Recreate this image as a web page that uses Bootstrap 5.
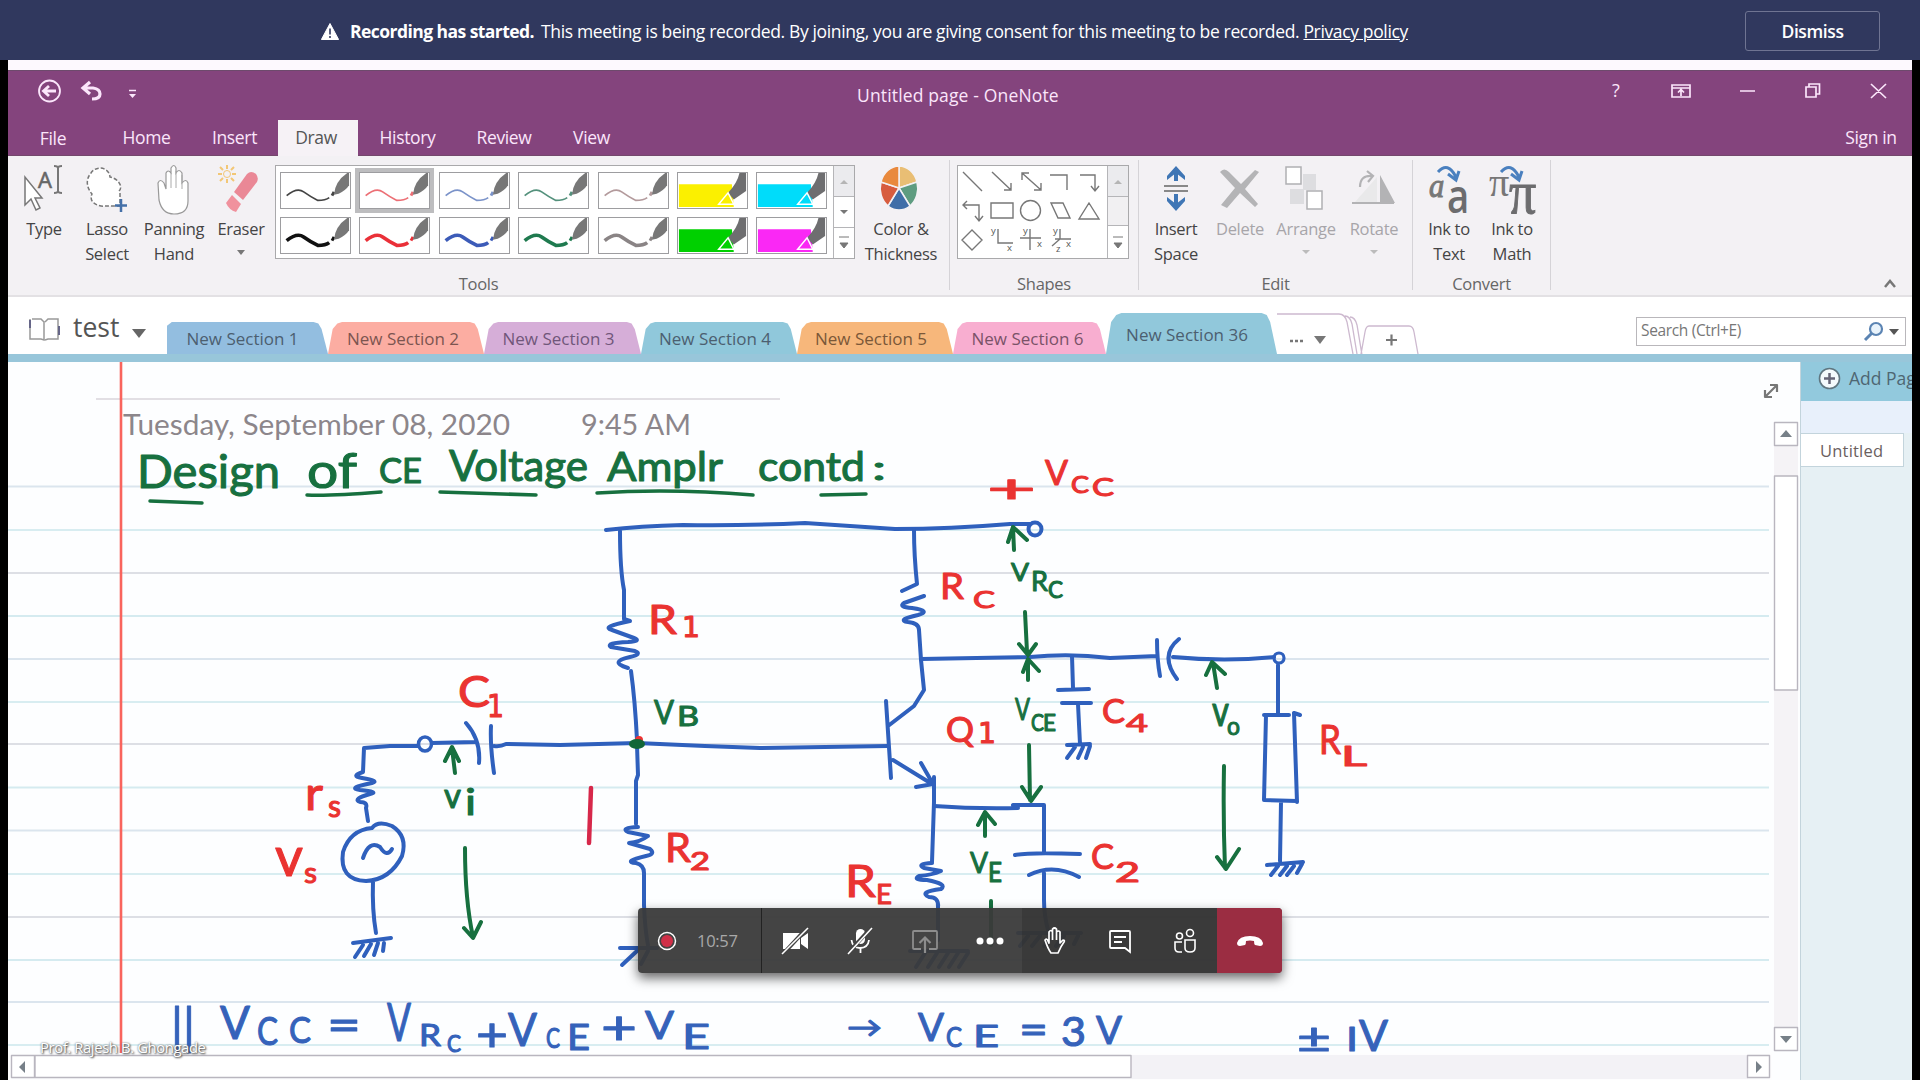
<!DOCTYPE html>
<html lang="en">
<head>
<meta charset="utf-8">
<title>Untitled page - OneNote</title>
<link href="https://cdn.jsdelivr.net/npm/bootstrap@5.3.0/dist/css/bootstrap.min.css" rel="stylesheet">
<style>
body{width:1920px;height:1080px;overflow:hidden;background:#000;font-family:"Open Sans","Noto Sans",sans-serif;color:#444}
svg{display:block;flex:none}
.banner{height:60px;background:#30385e;color:#fff;font-size:17.5px;padding:3px 40px 0 321px;letter-spacing:-.36px}
.banner a{color:#fff}
.banner strong{letter-spacing:-.55px;margin-right:7px}
.notice{margin-left:-5px}
.dismiss{width:135px;height:40px;margin-top:-2px;border:1px solid #6f7492;border-radius:3px;color:#fff;font-weight:600;font-size:17.5px;padding:2px 0 0;letter-spacing:-.4px}
.stage{margin:0 8px;height:1020px;background:#fdf9fe;padding-top:10px}
.titlebar{height:86px;background:#84447d;border-top:1px solid #6d4a6c;border-bottom:1px solid #74486c;color:#fbe6fb;font-size:17.5px}
.title-row{height:49px}
.title-text{padding:11px 0 0 9px;letter-spacing:.15px}
.menu-row{height:36px;letter-spacing:-.35px}
.menu-row>div{text-align:center;line-height:35px}
.menu-on{background:#f6f2f6;color:#555}
.ribbon{height:141px;background:#f3f1f4;border-bottom:2px solid #e3e1e4;font-size:16.5px;letter-spacing:-.3px}
.rgroup{border-right:1px solid #d5d3d7;height:130px;margin-top:4px}
.rrow{height:113px;padding-top:3px}
.rlabel{text-align:center;line-height:22px;color:#666}
.rbtn{text-align:center;line-height:25px}
.rbtn svg{margin:0 auto 3px;width:56px;height:50px;overflow:visible}
.dim{color:#a7a5a9}
.gallery{border:1px solid #a9a9ab;background:#fff;height:94px}
.pens{width:557px;padding:6px 4px;display:grid;grid-template-columns:repeat(7,71px);column-gap:8.4px;row-gap:8px;align-content:start}
.pens svg{border:1px solid #9d9da0;background:#fff;width:71px;height:37px}
.pens .picked{outline:4px solid #bdbdbf}
.gscroll{width:21px;border-left:1px solid #b5b5b8}
.gscroll div{height:31px;border-bottom:1px solid #b5b5b8}
.tabs-row{height:57px;background:#fff}
.tabs-row .book{width:159px;height:57px;font-size:26.500px;padding:0 0 0 20px;color:#555}
.book span{margin:3px 13px 0;line-height:1}
.sec{height:32px;line-height:34px;text-align:center;font-size:17px;color:#4c5f70;letter-spacing:0;clip-path:polygon(0 100%,3% 22%,6% 5%,9% 0,91% 0,94% 5%,96% 22%,100% 100%)}
.sec-on{height:41px;line-height:44px}
.search{width:270px;height:29px;border:1px solid #b9b7bb;font-size:15.5px;color:#777;letter-spacing:-.35px;margin:20px 6px 0 auto;padding-bottom:2px}
.strip{height:8px;background:#98c6da}
.page{height:718px}
.paper{width:1792px;background:#fdfeff}
.side{width:112px;background:#e6f0f4;border-left:1px solid #c3d4dc;overflow:hidden}
.addpage{height:39px;background:#92c9dd;color:#4f6672;font-size:17.5px;white-space:nowrap;padding:0 0 6px 17px}
.hint{height:32px;background:#e8f0fb}
.pagetab{width:103px;height:34px;background:#fff;border:1px solid #c3d4dc;border-left:0;line-height:33px;padding-left:19px;font-size:16.5px;letter-spacing:.2px;color:#6b5f5f}
.callbar{position:absolute;left:638px;top:908px;width:644px;height:65px;border-radius:4px;overflow:hidden;background:rgba(58,58,58,.95);color:#fff}
.callshadow{position:absolute;left:638px;top:908px;width:644px;height:65px;border-radius:4px;box-shadow:0 5px 12px rgba(0,0,0,.6)}
.callbar .slot{width:65px}
.rec{width:124px;border-right:1px solid #222;color:#a9a9a9;font-size:16.5px;letter-spacing:-.3px;padding-left:19px}
.rec span{margin:1px 0 0 -4px}
.later{background:rgba(40,40,40,.35)}
.hang{background:#9b2d42;flex:1}
.presenter{position:absolute;left:40px;top:1036px;font-size:14.8px;line-height:22px;color:#fff;letter-spacing:-.38px;text-shadow:1px 1px 2px #444,0 0 2px #666}
.ink{font-family:Lato,"Noto Sans",sans-serif;stroke-linejoin:round}
</style>
<script src="https://cdn.jsdelivr.net/npm/bootstrap@5.3.0/dist/js/bootstrap.bundle.min.js"></script>
</head>
<body>
<div class="banner d-flex align-items-center">
  <svg class="me-3" width="18" height="18" viewBox="0 0 18 18"><path d="M9 .5 17.6 16.500H.4Z" fill="#fff" stroke="#fff" stroke-linejoin="round"/><path d="M9 5.500v6M9 13v2" stroke="#30385e" stroke-width="1.600"/></svg>
  <div class="flex-grow-1 text-nowrap notice"><strong>Recording has started.</strong><span>This meeting is being recorded. By joining, you are giving consent for this meeting to be recorded.</span> <a href="#">Privacy policy</a></div>
  <button class="btn dismiss">Dismiss</button>
</div>
<div class="stage">
  <div class="titlebar">
    <div class="title-row d-flex">
      <svg width="840" height="48" viewBox="8 71 840 48" fill="none" stroke="#fbe6fb"><circle cx="49.500" cy="91" r="10.500" stroke-width="1.800"/><path d="M56 91H44M49 86l-5.500 5 5.500 5" stroke-width="2.800"/><path d="M84 88h9q7 1 7 6t-8 5M90 82l-7 6 7 6" stroke-width="3.200"/><path d="M129 90.500h7" stroke-width="1.500"/><path d="M129 94h7l-3.500 4Z" fill="#fbe6fb" stroke="none"/></svg>
      <div class="title-text text-nowrap">Untitled page - OneNote</div>
      <svg class="ms-auto" width="312" height="48" viewBox="1600 71 312 48" fill="none" stroke="#fbe6fb" stroke-width="1.700"><path d="M1672 85h18v12h-18zM1672 88h18M1681 96v-6M1678 92.500l3-3 3 3M1740 91h15M1806 87h10v10h-10zM1809 87v-3h10.500v10h-3M1871 84l15 14M1886 84l-15 14"/><text x="1612" y="97" font-size="18" stroke="none" fill="#fbe6fb">?</text></svg>
    </div>
    <div class="menu-row d-flex">
      <div style="width:90px;line-height:37px">File</div><div style="width:97px">Home</div><div class="pe-1" style="width:83px">Insert</div><div class="menu-on pe-1" style="width:80px">Draw</div><div style="width:99px">History</div><div style="width:94px">Review</div><div style="width:81px">View</div>
      <div class="ms-auto" style="width:82px">Sign in</div>
    </div>
  </div>
  <div class="ribbon d-flex">
    <div class="rgroup" style="width:942px">
      <div class="rrow d-flex" style="padding-left:5px">
        <div class="rbtn" style="width:62px"><svg viewBox="0 0 56 50"><path d="M9 14v28l6-6 5 11 4-2-5-10h7Z" fill="#fff" stroke="#777" stroke-width="1.500"/><text x="22" y="25" font-size="22" fill="#666" stroke="#666" stroke-width=".6">A</text><path d="M38 3q4 0 4 2 0-2 4-2M42 5v23M38 30q4 0 4-2 0 2 4 2" fill="none" stroke="#777" stroke-width="2"/></svg>Type</div>
        <div class="rbtn" style="width:64px"><svg viewBox="0 0 56 50"><path d="M40 28C45 23 38 15 31 14 30 4 17 2 12 10 6 17 8 25 13 31 9 40 20 44 27 43h14V28" fill="#fff" stroke="#777" stroke-width="1.500" stroke-dasharray="4 2"/><path d="M42 36v13M36 42.500h12" stroke="#4470a8" stroke-width="2.500"/></svg>Lasso<br>Select</div>
        <div class="rbtn" style="width:70px"><svg viewBox="0 0 56 50"><path d="M13 37 12 20q2-5 6 0l2 6V10q2-4 5 0V5q3-5 5 0v5q3-5 6 0v10q4-5 6 0v18q0 13-14 13-12 0-15-14Z" fill="#fff" stroke="#999" stroke-width="1.200"/><path d="M25 10v15M30 8v17M36 12v14" stroke="#aaa"/></svg>Panning<br>Hand</div>
        <div class="rbtn" style="width:64px"><svg viewBox="0 0 56 50"><path d="M21 29 34 11q4-4 9 0 3 4 1 8L30 37Z" fill="#ea8896"/><path d="m19 32-6 8q3 7 10 9l5-8Z" fill="#f0919d"/><g stroke="#f2c776" stroke-width="2"><path d="M14 2v4M14 16v4M5 11h4M19 11h4M7 4l3 3M18 15l3 3M21 4l-3 3M10 15l-3 3"/></g><circle cx="14" cy="11" r="3.500" fill="none" stroke="#f2c776"/></svg>Eraser<br><svg style="width:8px;height:5px;margin-top:9px" viewBox="0 0 8 5"><path d="M0 0h8L4 5Z" fill="#777"/></svg></div>
        <div class="gallery d-flex" style="width:580px;margin:2px 3px 0 2px">
          <div class="pens" id="pens"></div>
          <div class="gscroll"><div style="background:#ebebee"><svg width="20" height="30"><path d="M6 18h8l-4-4Z" fill="#b5b5b5"/></svg></div><div><svg width="20" height="30"><path d="M6 13h8l-4 4Z" fill="#777"/></svg></div><svg width="20" height="30"><path d="M5 9h10M6 15h8l-4 5Z" fill="#777" stroke="#777"/></svg></div>
        </div>
        <div class="rbtn" style="width:86px"><svg style="position:relative;left:-2px" viewBox="0 0 56 50" stroke="#f3f1f4" stroke-width="1.500"><path d="M28 25V3A19 22 0 0 1 46 19Z" fill="#e9be74"/><path d="M28 25 46 19A19 22 0 0 1 39 43Z" fill="#5e9c80"/><path d="M28 25 39 43Q28 51 17 43Z" fill="#3f6ea8"/><path d="M28 25 17 43A19 22 0 0 1 10 19Z" fill="#d75c3e"/><path d="M28 25 10 19A19 22 0 0 1 28 3Z" fill="#e9893d"/></svg>Color &amp;<br>Thickness</div>
      </div>
      <div class="rlabel">Tools</div>
    </div>
    <div class="rgroup" style="width:189px">
      <div class="rrow d-flex" style="padding-left:7px">
        <div class="gallery d-flex" style="width:172px;margin-top:2px">
          <svg width="149" height="92" viewBox="958 166 149 92" fill="none" stroke="#777" stroke-width="1.400"><path d="M963 172l19 19M992 172l19 18M1011 183v7h-7M1022 173l19 17M1022 180v-7h7M1041 183v7h-7M1050 175h17v15M1080 175h15v16M1091 186l4 5 4-5M963 205h16v16M967 201l-4 4 4 4M975 216l4 5 4-5M991 203h22v15h-22zM1051 203h12l7 15h-12zM1089 203l10 16h-20zM972 230l10 10-10 10-10-10zM998 229v14h15M1020 238h21M1030 229v21M1060 229v10l-8 7M1055 239h16"/><circle cx="1030.500" cy="210.500" r="10"/><g font-size="9.500" fill="#555" stroke="none"><text x="991" y="234">y</text><text x="1007" y="251">x</text><text x="1023" y="234">y</text><text x="1037" y="247">x</text><text x="1053" y="234">y</text><text x="1066" y="247">x</text><text x="1056" y="252">z</text></g></svg>
          <div class="gscroll"><div style="background:#ebebee"><svg width="20" height="30"><path d="M6 18h8l-4-4Z" fill="#b5b5b5"/></svg></div><div style="background:#f1f0f2;height:29px"></div><svg width="20" height="30"><path d="M5 11h10M6 17h8l-4 5Z" fill="#777" stroke="#777"/></svg></div>
        </div>
      </div>
      <div class="rlabel">Shapes</div>
    </div>
    <div class="rgroup" style="width:274px">
      <div class="rrow d-flex" style="padding-left:5px">
        <div class="rbtn" style="width:64px"><svg viewBox="0 0 56 50"><path d="M28 5v13M28 44V31" stroke="#3f76b5" stroke-width="4"/><path d="m28 3 9 10v4l-9-7-9 7v-4ZM28 48l9-10v-4l-9 7-9-7v4Z" fill="#3f76b5"/><path d="M16 23h24M16 28h24" stroke="#888" stroke-width="2"/></svg>Insert<br>Space</div>
        <div class="rbtn dim" style="width:64px"><svg viewBox="0 0 56 50"><path d="M8 9q4-5 9 0l12 12L43 7l4 2-14 17 13 15-3 3-15-14-13 15-6-3 14-17Z" fill="#b4b4b6"/></svg>Delete</div>
        <div class="rbtn dim" style="width:68px"><svg viewBox="0 0 56 50"><path d="M25 11h13v16H25zM12 26h14v15H12z" fill="#dddde0"/><path d="M8 4h15v17H8zM29 28h15v18H29z" fill="#fff" stroke="#b0b0b3" stroke-width="1.500"/></svg>Arrange<br><svg style="width:8px;height:4px;margin-top:9px" viewBox="0 0 8 4"><path d="M0 0h8L4 4Z" fill="#bbb"/></svg></div>
        <div class="rbtn dim" style="width:68px"><svg viewBox="0 0 56 50"><path d="M31 14v25H9Z" fill="#e9e9ea"/><path d="M34 12v28h15Z" fill="#b3b3b5"/><path d="M6 40h42M14 24q0-12 12-11M21 8l6 5-5 6" fill="none" stroke="#b3b3b5" stroke-width="2.200"/></svg>Rotate<br><svg style="width:8px;height:4px;margin-top:9px" viewBox="0 0 8 4"><path d="M0 0h8L4 4Z" fill="#bbb"/></svg></div>
      </div>
      <div class="rlabel">Edit</div>
    </div>
    <div class="rgroup" style="width:138px">
      <div class="rrow d-flex" style="padding-left:5px">
        <div class="rbtn" style="width:62px"><svg viewBox="0 0 56 50"><text x="8" y="34" font-size="34" font-style="italic" font-family="Liberation Serif" fill="#777" stroke="#777" textLength="15" lengthAdjust="spacingAndGlyphs">a</text><text x="26" y="50" font-size="47" fill="#6c6c6e" font-weight="600" textLength="22" lengthAdjust="spacingAndGlyphs">a</text><path d="M17 9q10-11 18 5M27 11l8 6 3-9" fill="none" stroke="#4a80bf" stroke-width="3"/></svg>Ink to<br>Text</div>
        <div class="rbtn" style="width:64px"><svg viewBox="0 0 56 50"><text x="5" y="33" font-size="40" font-family="Liberation Serif" fill="#777" textLength="20" lengthAdjust="spacingAndGlyphs">π</text><text x="25" y="50" font-size="62" font-family="Liberation Serif" fill="#6c6c6e" stroke="#6c6c6e" textLength="27" lengthAdjust="spacingAndGlyphs">π</text><path d="M17 9q10-11 18 5M27 11l8 6 3-9" fill="none" stroke="#4a80bf" stroke-width="3"/></svg>Ink to<br>Math</div>
      </div>
      <div class="rlabel">Convert</div>
    </div>
    <svg class="ms-auto align-self-end" style="margin-bottom:5px" width="30" height="12"><path d="m3 9 5-6 5 6" fill="none" stroke="#777" stroke-width="2.500"/></svg>
  </div>
  <div class="tabs-row d-flex align-items-end">
    <div class="book d-flex align-items-center"><svg width="32" height="28" viewBox="0 0 32 28" fill="none" stroke="#777" stroke-width="1.500" class="mt-2"><path d="M4 3h9l3 3v18l-3-1H2V3M17 6l3-3h10v20H20l-3 1" stroke="#999"/><path d="M2 4v8M31 10v9" stroke="#668" stroke-width="2"/></svg><span>test</span><svg width="14" height="9" class="mt-3"><path d="M0 0h14L7 9Z" fill="#666"/></svg></div>
    <div class="sec" style="width:161px;background:#93bee0;padding-right:10px;clip-path:polygon(0 100%,0 12%,3% 0,91% 0,94% 5%,96% 22%,100% 100%)">New Section 1</div>
    <div class="sec" style="width:156px;background:#fcada2;color:#7c5550;padding-right:6px">New Section 2</div>
    <div class="sec" style="width:157px;background:#d6aed8;color:#70567a;padding-right:8px">New Section 3</div>
    <div class="sec" style="width:156px;background:#90c8db;padding-right:8px">New Section 4</div>
    <div class="sec" style="width:156px;background:#f7b77b;color:#7b5838;padding-right:8px">New Section 5</div>
    <div class="sec" style="width:153px;background:#f8aed0;color:#7a5268;padding-right:4px">New Section 6</div>
    <div class="sec sec-on" style="width:171px;background:#91c8db;padding-right:9px">New Section 36</div>
    <svg width="150" height="42" viewBox="1277 312 150 42" fill="none" stroke="#cdb9cf" stroke-width="1.300"><path d="M1268 314h71q6 0 8 8l6 32M1345 316q5 0 7 8l5 30M1350 317q5 0 7 8l5 30M1361 354l4-22q1-6 4-6h40q4 0 5 6l4 22"/><path d="M1290 341h3m2 0h3m2 0h3" stroke="#777" stroke-width="2.500"/><path d="M1314 336h12l-6 8Z" fill="#777" stroke="none"/><path d="M1386 340h11M1391.500 334.500v11" stroke="#777" stroke-width="2.200"/></svg>
    <div class="search d-flex align-items-center align-self-start ps-1">Search (Ctrl+E)<svg class="ms-auto" width="46" height="24"><circle cx="17" cy="10" r="6" fill="#e9f3fb" stroke="#5b84b3" stroke-width="2.200"/><path d="m13 14-7 7" stroke="#5b84b3" stroke-width="3"/><path d="M30 10h10l-5 6Z" fill="#555"/></svg></div>
  </div>
  <div class="strip"></div>
  <div class="page d-flex">
    <div class="paper">
      <svg id="canvas" class="ink" width="1792" height="718" viewBox="8 362 1792 718">
        <g id="rules"></g>
        <path d="M96 399H780" stroke="#e2dfe4" stroke-width="2"/>
        <path d="M121 362V1053" stroke="#f9645d" stroke-width="2.600"/>
        <g fill="#8c868b" font-size="28.500"><text x="123" y="434.500" textLength="387" lengthAdjust="spacingAndGlyphs">Tuesday, September 08, 2020</text><text x="581" y="434.500" textLength="110" lengthAdjust="spacingAndGlyphs">9:45 AM</text></g>
        <g fill="none" stroke="#2f60bd" stroke-width="4" stroke-linecap="round">
          <path d="M606 530Q640 526 683 525Q740 526 805 523Q850 526 895 529Q950 529 1010 524L1030 524"/><ellipse cx="1035" cy="529" rx="6.500" ry="6.500"/>
          <path d="M620 531Q620 570 624 590V619L630 621Q600 627 612 630L634 638Q642 641 628 642 605 643 611 647L635 651Q643 654 630 657 608 662 628 668M631 671Q635 700 637 740"/>
          <path d="M494 746Q500 747 506 744L560 745 637 743Q700 746 760 748L888 746M637 745L638 775L636 781V824"/>
          <path d="M638 827Q620 828 628 832L648 836Q640 842 629 843L650 849Q656 854 646 856 622 862 636 863 644 865 644 873V905Q645 930 648 945M620 948H657M638 950L622 965M648 951l-7 13"/>
          <path d="M914 530Q914 555 917 584L902 591M924 596L904 603Q898 607 912 608 932 611 918 615 896 620 908 622 919 623 919 630L921 660L924 690L914 706L888 726M886 701L891 778M893 760L932 784M921 763L933 784 916 787M934 777V802L932 862"/>
          <path d="M932 863Q916 864 924 868L941 871Q932 875 919 876 912 880 927 880 948 884 941 889 918 892 929 897 939 897 938 907V940M910 951H968M925 953l-9 14M937 953l-9 14M948 953l-9 14M958 953l-9 14M968 953l-9 14"/>
          <path d="M934 806Q975 809 1018 808L1013 805H1044V852M1015 855Q1030 852 1080 854M1029 875Q1053 863 1079 877M1044 873V900Q1044 915 1048 930M1018 933H1081M1028 936l-8 10M1040 936l-8 10M1052 936l-8 10M1064 936l-8 10M1078 936l-4 8"/>
          <path d="M921 659L1030 657Q1070 653 1110 658L1157 656M1157 640Q1157 660 1160 676M1179 639Q1159 655 1177 679M1173 657Q1225 662 1274 657"/><circle cx="1279" cy="658" r="5" stroke-width="3.200"/>
          <path d="M1278 665V714M1300 715L1294 713 1297 802M1264 715H1289M1266 715L1264 800 1297 801M1281 802L1280 861M1267 865L1303 862M1278 866l-7 9M1287 866l-7 9M1294 866l-7 9M1302 864l-5 9"/>
          <path d="M1072 656L1073 688M1058 690L1089 689M1062 703H1091M1078 704L1080 744M1067 745L1090 744M1075 747l-8 11M1083 747l-5 11M1090 746l-4 12"/>
          <path d="M418 746L390 746 364 748 363 772Q350 776 362 778 380 781 372 783 346 788 360 790 380 792 370 794 352 799 360 802 368 802 366 808L368 821"/><ellipse cx="425" cy="744" rx="6.500" ry="7" stroke-width="3.500"/><path d="M432 743L475 742M466 723Q481 740 479 763M491 726Q490 745 494 773"/>
          <path d="M372 828Q350 830 343 852 339 880 366 881 390 880 402 856 408 836 392 826 378 820 372 828M363 858Q369 840 380 847 387 858 392 849M373 881Q372 910 376 933M353 943L391 938M363 945l-8 12M371 944l-7 12M378 943l-4 12M384 943l-1 8" />
        </g>
        <circle cx="639" cy="740" r="4" fill="#e33"/><ellipse cx="637" cy="744" rx="8" ry="5" fill="#126638"/>
        <g fill="none" stroke="#17703f" stroke-width="4" stroke-linecap="round">
          <path d="M455 773L452 748M445 761L452 747 459 761M465 848Q465 900 473 937M464 928L473 938 481 922"/>
          <path d="M1014 550L1013 527M1008 542L1013 527 1027 540M1025 612L1027 652M1019 644L1028 655 1036 644M1028 680V660M1023 672L1028 659 1039 671M1029 745L1030 800M1022 787L1031 801 1041 787"/>
          <path d="M1217 688L1213 663M1206 675L1212 662 1225 674M1224 766Q1223 820 1225 868M1217 857L1226 869 1239 849M985 836V814M978 825L985 812 995 824M991 901V945"/>
          <path stroke-width="3.500" d="M150 501L202 503M307 495Q330 496 381 492M440 492L536 495M597 493Q670 488 753 495M821 495L866 494"/>
        </g>
        <path d="M591 788L589 843" stroke="#d7284a" stroke-width="4.500" stroke-linecap="round"/>
        <g id="notes"></g>
        <rect x="8" y="1053.500" width="1764" height="27" fill="#fdfdfe"/>
        <rect x="1774" y="446" width="24" height="582" fill="#f5f3f6"/><rect x="1131" y="1055" width="617" height="24" fill="#f3f2f6"/>
        <g fill="#fff" stroke="#b9b6bf" stroke-width="1.400"><rect x="1774.500" y="422.500" width="23" height="23"/><rect x="1774.500" y="476" width="23" height="214"/><rect x="1774.500" y="1027.500" width="23" height="23"/><rect x="11.500" y="1055.500" width="23" height="22"/><rect x="35" y="1055.500" width="1096" height="22"/><rect x="1747.500" y="1055.500" width="22" height="22"/></g>
        <path d="M1780 437h12l-6-7ZM1780 1036h12l-6 7ZM25 1061v12l-6-6ZM1756 1061v12l6-6Z" fill="#778088"/>
        <path d="M1766 396l10-10M1770 385h7v7M1765 390v7h7" fill="none" stroke="#777" stroke-width="2.200"/>
      </svg>
    </div>
    <div class="side">
      <div class="addpage d-flex align-items-center"><svg width="23" height="23" class="me-2"><circle cx="11.500" cy="11.500" r="10" fill="#f4fafc" stroke="#5f7680" stroke-width="1.600"/><path d="M6 11.500h11M11.500 6v11" stroke="#667" stroke-width="2.500"/></svg>Add Page</div>
      <div class="hint"></div>
      <div class="pagetab">Untitled</div>
    </div>
  </div>
</div>
<div class="presenter text-nowrap">Prof. Rajesh B. Ghongade</div>
<div class="callshadow"></div>
<div class="callbar d-flex">
  <div class="rec d-flex align-items-center"><svg width="20" height="20" class="me-4"><circle cx="10" cy="10" r="8.500" fill="none" stroke="#fff" stroke-width="1.500"/><circle cx="10" cy="10" r="6" fill="#d03048"/></svg><span>10:57</span></div>
  <div class="slot d-flex align-items-center justify-content-center"><svg width="30" height="28" viewBox="0 0 30 28"><path d="M3 6h17v16H3zM21 11l7-5v16l-7-5z" fill="#fff"/><path d="M28 0 3 27" stroke="#434343" stroke-width="4"/><path d="M28 1 2 27" stroke="#fff" stroke-width="1.600"/></svg></div>
  <div class="slot d-flex align-items-center justify-content-center"><svg width="28" height="28" viewBox="0 0 28 28"><rect x="10" y="2" width="9" height="15" rx="4.500" fill="#fff"/><path d="M5.500 13q1 8 8.500 8 8 0 9-8M14.500 21v5" fill="none" stroke="#fff" stroke-width="1.800"/><path d="M26 0 3 25" stroke="#434343" stroke-width="4"/><path d="M26 1 2 27" stroke="#fff" stroke-width="1.600"/></svg></div>
  <div class="slot d-flex align-items-center justify-content-center"><svg width="28" height="26" viewBox="0 0 28 26" fill="none" stroke="#8d8d8d" stroke-width="1.800"><path d="M10 21H3q-1 0-1-1V4q0-1 1-1h22q1 0 1 1v16q0 1-1 1h-7"/><path d="M14 25V10M8.500 15 14 9.500l5.500 5.500" stroke-width="2.200"/></svg></div>
  <div class="slot d-flex align-items-center justify-content-center"><svg width="28" height="10"><g fill="#fff"><circle cx="4" cy="5" r="3.500"/><circle cx="14" cy="5" r="3.500"/><circle cx="24" cy="5" r="3.500"/></g></svg></div>
  <div class="slot later d-flex align-items-center justify-content-center"><svg width="24" height="28" viewBox="0 0 24 28"><path d="M8 26Q5 22 2 13q2-2 3 1l1 2V5q2-3 3.500 0V2q2-2 4 0v3q2-2 3.500 0v11l3-3q2 0 1 2-3 4-6 11ZM9.500 5v8M13.500 4v9" fill="none" stroke="#fff" stroke-width="1.700" stroke-linejoin="round"/></svg></div>
  <div class="slot later d-flex align-items-center justify-content-center"><svg width="24" height="26" viewBox="0 0 24 26"><path d="M3 3h18q1 0 1 1v20l-5-4H3q-1 0-1-1V4q0-1 1-1ZM6 9h12M6 14h8" fill="none" stroke="#fff" stroke-width="1.800"/></svg></div>
  <div class="slot later d-flex align-items-center justify-content-center"><svg width="24" height="26" viewBox="0 0 24 26" fill="none" stroke="#fff" stroke-width="1.600"><circle cx="6.500" cy="8" r="3"/><circle cx="17" cy="5" r="3.500"/><path d="M9 14H2v6q0 4 4 4h3M12 12h10v8q0 4-5 4t-5-4Z"/></svg></div>
  <div class="hang d-flex align-items-center justify-content-center"><svg width="28" height="14" viewBox="0 0 28 14"><path d="M1 9Q3 2 14 2t13 7q0 3-3 3l-5-1q-1-1-1-4-4-1-8 0 0 3-1 4l-5 1q-3 0-3-3Z" fill="#fff"/></svg></div>
</div>
<script>
// Pen gallery: thin and thick pens in five inks, then the highlighters
const nib = '<path d="M55 23Q56 9 69 0H71V13Q68 18 60 22Z" fill="#777"/>';
const pen = (c, w, on) => `<svg viewBox="0 0 71 37"${on ? ' class="picked"' : ''}><path d="M5 24Q16 15 23 20T38 29Q46 29 50 26" fill="none" stroke="${c}" stroke-width="${w}"/><path d="M53 24l2-4" stroke="${c}" stroke-width="3"/>${nib}</svg>`;
const marker = c => `<svg viewBox="0 0 71 37"><path d="M0 12H56L58 36H0Z" fill="${c}"/><path d="M52 21Q62 10 64 0H71V19L58 28Z" fill="#6e6e70"/><path d="M42 33l10-12 6 12Z" fill="${c}" stroke="#fff" stroke-width="1.5"/></svg>`;
document.getElementById('pens').innerHTML =
  [['#444'],['#ec6f75',1],['#7b93c9'],['#54917c'],['#b39a9c']].map(p => pen(p[0], 1.8, p[1])).join('') + marker('#fbf000') + marker('#00dcfa') +
  ['#111','#ea3038','#3c5bb8','#1f7a4f','#8a8485'].map(c => pen(c, 3.8)).join('') + marker('#00d000') + marker('#fa28f5');

// Ruled lines of the notebook paper
document.getElementById('rules').innerHTML = [486.5,530,573,616,659,702,744,787.5,830.5,874,917,960,1002,1045]
  .map((y, i) => `<path d="M8 ${y}H1769" stroke="${['#dbe5ee','#d8edf1','#dddfe5','#d5ebf0'][i % 4]}" stroke-width="2"/>`).join('');

// Handwritten labels: text, left, top, width, height of the capitals, ink
const R = '#ea3331', G = '#17703f', B = '#3562ba';
const labels = [
 ['Design',137,454,143,34,G],['of',307,453,50,35,G],['CE',379,458,43,25,G],['Voltage',449,450,139,31,G],['Amplr',607,452,116,29,G],['contd',758,452,107,29,G],[':',872,456,14,24,G],
 ['C',458,676,32,31,R],['1',487,694,17,23,R],['R',648,605,29,29,R],['1',682,617,18,20,R],['V',654,700,20,24,G],['B',677,706,22,20,G],
 ['R',940,572,24,27,R],['C',973,591,22,17,R],['V',1011,563,18,18,G],['R',1031,571,17,20,G],['C',1048,582,15,16,G],
 ['+',987,474,49,28,R],['V',1045,460,23,25,R],['C',1071,477,18,16,R],['C',1092,478,22,18,R],
 ['Q',946,717,28,25,R],['1',978,723,18,20,R],['V',1015,698,15,22,G],['C',1031,714,13,17,G],['E',1043,715,13,16,G],
 ['C',1102,699,23,24,R],['4',1126,714,22,18,R],['v',1212,696,17,30,G],['o',1227,717,13,18,G],['R',1319,725,22,29,R],['L',1341,747,26,19,R],
 ['R',665,833,26,29,R],['2',690,852,20,18,R],['R',845,865,31,32,R],['E',876,884,16,20,R],['V',970,852,18,21,G],['E',988,863,14,19,G],
 ['C',1091,844,23,25,R],['2',1115,863,25,19,R],['r',305,777,18,33,R],['s',328,795,13,22,R],['v',275,837,28,39,R],['s',304,862,13,21,R],
 ['v',444,783,17,25,G],['i',465,789,11,26,G],
 ['||',171,1009,24,40,B],['V',220,1005,30,34,B],['C',257,1017,21,28,B],['C',289,1017,22,26,B],['=',327,1007,34,34,B],['V',387,1004,24,37,B],
 ['R',419,1024,22,22,B],['C',447,1036,14,16,B],['+',476,1017,32,34,B],['V',508,1012,29,34,B],['C',546,1029,14,19,B],['E',567,1024,23,26,B],
 ['+',601,1010,36,34,B],['V',645,1011,29,28,B],['E',682,1024,28,25,B],['→',847,1017,35,20,B],['V',918,1013,26,28,B],['C',946,1028,16,19,B],
 ['E',973,1025,26,22,B],['=',1019,1013,29,31,B],['3',1061,1017,25,29,B],['V',1096,1016,26,28,B],['±',1297,1024,34,29,B],['I',1346,1027,12,24,B],['V',1359,1020,29,31,B]];
document.getElementById('notes').innerHTML = labels.map(([t,x,y,w,h,c]) =>
  `<text x="${x}" y="${y+h}" font-size="${(h/.72).toFixed(1)}"${t === '1' ? ' font-family="DejaVu Sans"' : ''} textLength="${w}" lengthAdjust="spacingAndGlyphs" fill="${c}" stroke="${c}" stroke-width="1.1">${t}</text>`).join('');
</script>
</body>
</html>
